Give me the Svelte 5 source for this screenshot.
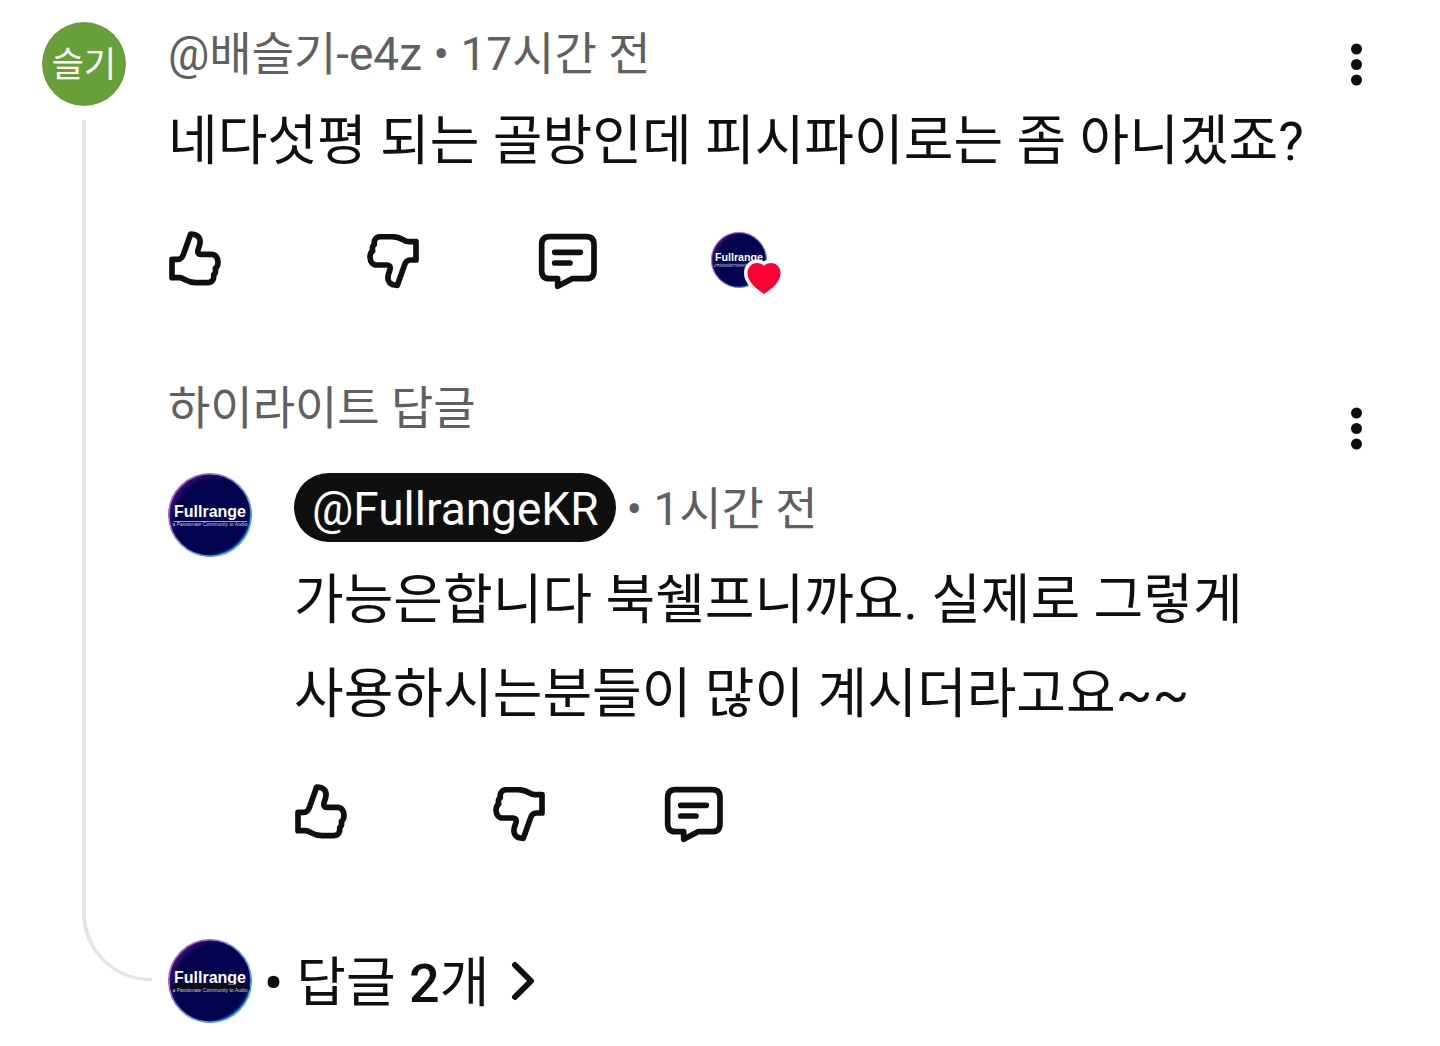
<script>
  let liked = $state({ comment: false, reply: false });
  let disliked = $state({ comment: false, reply: false });

  const comment = {
    initials: "슬기",
    author: "@배슬기-e4z",
    time: "17시간 전",
    text: "네다섯평 되는 골방인데 피시파이로는 좀 아니겠죠?"
  };

  const reply = {
    author: "@FullrangeKR",
    time: "1시간 전",
    text: "가능은합니다 북쉘프니까요. 실제로 그렇게 사용하시는분들이 많이 계시더라고요~~"
  };

  const replyCount = 2;

  function toggleLike(id) {
    liked[id] = !liked[id];
    disliked[id] = false;
  }

  function toggleDislike(id) {
    disliked[id] = !disliked[id];
    liked[id] = false;
  }
</script>

{#snippet channelLogo(id)}
  <svg class="logo" viewBox="0 0 84 84" role="img" aria-label="Fullrange">
    <defs>
      <linearGradient id="ring-{id}" x1="0" y1="0.2" x2="1" y2="0.8">
        <stop offset="0" stop-color="#b45fc4" />
        <stop offset="0.45" stop-color="#8a8ddb" />
        <stop offset="1" stop-color="#35aef0" />
      </linearGradient>
      <radialGradient id="glow-{id}" cx="0.58" cy="0.56" r="0.62">
        <stop offset="0.8" stop-color="#02024f" />
        <stop offset="1" stop-color="#5c1480" />
      </radialGradient>
      <radialGradient id="edge-{id}" cx="0.46" cy="0.46" r="0.56">
        <stop offset="0.9" stop-color="#0a4fb0" stop-opacity="0" />
        <stop offset="1" stop-color="#1f9be6" />
      </radialGradient>
    </defs>
    <circle cx="42" cy="42" r="41.5" fill="url(#glow-{id})" />
    <circle cx="42" cy="42" r="41.5" fill="url(#edge-{id})" />
    <circle cx="42" cy="42" r="41.2" fill="none" stroke="url(#ring-{id})" stroke-width="1.6" />
    <text x="42" y="44" class="logo-name">Fullrange</text>
    <path d="M6 48.5H79" stroke="#c9c9e4" stroke-width="0.8" />
    <text x="42" y="53" class="logo-tag">a Passionate Community to Audio</text>
  </svg>
{/snippet}

{#snippet thumb()}
  <path d="M12 88V143H34C50 143 54 158 84 158H118C132 158 139 149 137 134Q145 129 142 115Q150 110 150 96C149 82 142 73 130 73H98C91 73 88 68 90 60L95 44C100 24 90 12 68 12L46 74C43 83 38 88 30 88Z" />
{/snippet}

{#snippet actions(id)}
  <button class="icon up" aria-label="좋아요" aria-pressed={liked[id]} onclick={() => toggleLike(id)}>
    <svg viewBox="0 0 168 168" width="56" height="56">{@render thumb()}</svg>
  </button>
  <button class="icon" aria-label="싫어요" aria-pressed={disliked[id]} onclick={() => toggleDislike(id)}>
    <svg viewBox="0 0 168 168" width="56" height="56"><g transform="rotate(180 84 83)">{@render thumb()}</g></svg>
  </button>
  <button class="icon" aria-label="답글">
    <svg viewBox="0 0 180 180" width="60" height="60">
      <path d="M35 20H144Q168 20 168 44V122Q168 146 144 146H102L59 169V146H35Q11 146 11 122V44Q11 20 35 20Z" />
      <path d="M50 67H127M50 99H96" />
    </svg>
  </button>
{/snippet}

{#snippet menu()}
  <button class="menu" aria-label="작업 메뉴">
    <svg viewBox="0 0 24 84" width="24" height="84">
      <circle cx="12.5" cy="27" r="5.5" />
      <circle cx="12.5" cy="42.5" r="5.5" />
      <circle cx="12.5" cy="58" r="5.5" />
    </svg>
  </button>
{/snippet}

<article class="thread">
  <div class="rail">
    <div class="avatar initials">{comment.initials}</div>
    <div class="line"></div>
  </div>

  <div class="content">
    <section class="entry">
      <div class="main">
        <div class="meta"><span>{comment.author}</span> • <span>{comment.time}</span></div>
        <p class="text">{comment.text}</p>
        <div class="actions">
          {@render actions("comment")}
          <div class="hearted">
            {@render channelLogo("heart")}
            <svg class="heart" viewBox="0 0 40 38" width="40" height="38">
              <path d="M20 35C13 30 3.500 23.500 3.500 14C3.500 8 8 4 13 4C16 4 18.500 5 20 7C21.500 5 24 4 27 4C32 4 36.500 8 36.500 14C36.500 23.500 27 30 20 35Z" />
            </svg>
          </div>
        </div>
      </div>
      {@render menu()}
    </section>

    <section class="entry">
      <div class="main">
        <h2 class="label">하이라이트 답글</h2>
        <div class="reply">
          <div class="avatar">{@render channelLogo("reply")}</div>
          <div class="main">
            <div class="reply-meta">
              <a class="owner" href="#channel">{reply.author}</a>
              <span class="meta">• {reply.time}</span>
            </div>
            <p class="text">{reply.text}</p>
            <div class="actions">{@render actions("reply")}</div>
          </div>
        </div>
      </div>
      {@render menu()}
    </section>

    <button class="more">
      <span class="avatar">{@render channelLogo("more")}</span>
      <span class="more-text"><b>•</b> 답글 <b>{replyCount}</b>개</span>
      <svg viewBox="0 0 24 42" width="24" height="42">
        <path d="M4 5L20 21L4 37" />
      </svg>
    </button>
  </div>
</article>

<style>
  :global(body) {
    margin: 0;
    background: #fff;
  }

  .thread {
    display: flex;
    gap: 42px;
    padding: 22px 72px 23px 42px;
    background: #fff;
    color: #0f0f0f;
    font-family: Roboto, "Noto Sans CJK KR", sans-serif;
  }

  .rail {
    display: flex;
    flex-direction: column;
    flex: none;
    width: 84px;
  }

  .line {
    flex: 1;
    width: 66px;
    margin: 14px 0 42px 40px;
    border-left: 4px solid #e5e5e5;
    border-bottom: 3px solid #e5e5e5;
    border-bottom-left-radius: 68px;
  }

  .avatar {
    flex: none;
    width: 84px;
    height: 84px;
  }

  .initials {
    border-radius: 50%;
    background: #689f38;
    color: #fff;
    font-size: 35px;
    line-height: 88px;
    text-align: center;
  }

  .content {
    display: flex;
    flex-direction: column;
    flex: 1;
    gap: 96px;
    min-width: 0;
  }

  .entry {
    display: flex;
    align-items: flex-start;
  }

  .main {
    flex: 1;
    min-width: 0;
  }

  .meta,
  .owner,
  .label {
    color: #606060;
    font-size: 46px;
    font-weight: 400;
  }

  .meta {
    height: 61px;
    line-height: 65px;
  }

  .label {
    margin: 0 0 43px;
    line-height: 44px;
  }

  .reply {
    display: flex;
    gap: 42px;
  }

  .reply-meta {
    display: flex;
    align-items: center;
    gap: 11px;
  }

  .owner {
    padding: 4px 17px 0 18px;
    border-radius: 35px;
    background: #0f0f0f;
    color: #fff;
    line-height: 65px;
    text-decoration: none;
  }

  .text {
    margin: 12px 0 41px;
    font-size: 54px;
    line-height: 94px;
    word-break: keep-all;
  }

  .actions {
    display: grid;
    grid-template-columns: 196px 174px 173px auto;
    justify-content: start;
    align-items: end;
    height: 60px;
  }

  button {
    display: block;
    padding: 0;
    border: 0;
    background: none;
    color: inherit;
    font: inherit;
    cursor: pointer;
  }

  svg {
    display: block;
  }

  .icon {
    justify-self: start;
  }

  .up {
    align-self: start;
  }

  .icon path {
    fill: none;
    stroke: #0f0f0f;
    stroke-width: 17;
    stroke-linecap: round;
    stroke-linejoin: round;
  }

  .menu {
    flex: none;
    fill: #0f0f0f;
  }

  .logo {
    width: 100%;
    height: 100%;
  }

  .logo-name,
  .logo-tag {
    fill: #fff;
    font-family: "Liberation Sans", sans-serif;
    text-anchor: middle;
  }

  .logo-name {
    font-size: 16px;
    font-weight: 700;
  }

  .logo-tag {
    fill: #c9c9e4;
    font-size: 5px;
  }

  .hearted {
    position: relative;
    align-self: center;
    width: 56px;
    height: 56px;
  }

  .heart {
    position: absolute;
    right: -17px;
    bottom: -9px;
    overflow: visible;
  }

  .heart path {
    fill: #ff0033;
    stroke: #fff;
    stroke-width: 7;
    stroke-linejoin: round;
    paint-order: stroke;
  }

  .more {
    display: flex;
    align-items: center;
    align-self: flex-start;
  }

  .more-text {
    height: 84px;
    margin: 0 22px 0 12px;
    font-size: 54px;
    line-height: 90px;
  }

  .more-text b {
    font-weight: 500;
  }

  .more path {
    fill: none;
    stroke: #0f0f0f;
    stroke-width: 6;
    stroke-linecap: round;
    stroke-linejoin: round;
  }
</style>
